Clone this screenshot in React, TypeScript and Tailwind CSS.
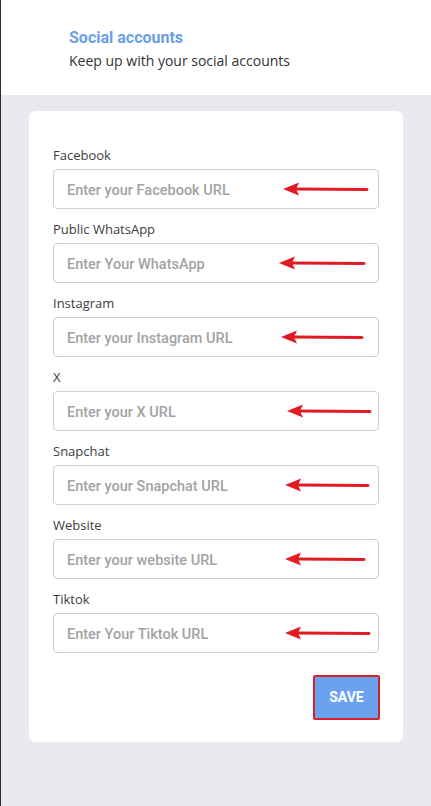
import React from "react";

type Field = {
  label: string;
  placeholder: string;
  // annotation arrow: tip x and tail x, relative to the input's left edge
  tip: number;
  tail: number;
};

const FIELDS: Field[] = [
  { label: "Facebook", placeholder: "Enter your Facebook URL", tip: 230, tail: 314 },
  { label: "Public WhatsApp", placeholder: "Enter Your WhatsApp", tip: 226, tail: 311 },
  { label: "Instagram", placeholder: "Enter your Instagram URL", tip: 228, tail: 309 },
  { label: "X", placeholder: "Enter your X URL", tip: 234, tail: 317 },
  { label: "Snapchat", placeholder: "Enter your Snapchat URL", tip: 232, tail: 315 },
  { label: "Website", placeholder: "Enter your website URL", tip: 232, tail: 311 },
  { label: "Tiktok", placeholder: "Enter Your Tiktok URL", tip: 232, tail: 316 },
];

function Arrow({ tip, tail }: { tip: number; tail: number }) {
  return (
    <svg
      className="pointer-events-none absolute left-0 top-0"
      width="326"
      height="40"
      viewBox="0 0 326 40"
    >
      <line x1={tip + 12} y1="20" x2={tail} y2="20.5" stroke="#e01b22" strokeWidth="3" strokeLinecap="round" />
      <path d={`M${tip} 20 L${tip + 16} 13.5 L${tip + 13} 20 L${tip + 16} 26.5 Z`} fill="#e01b22" />
    </svg>
  );
}

export default function App() {
  return (
    <div className="min-h-screen w-full border-l border-[#2b2b2b] bg-[#e9eaee] font-['Open_Sans',sans-serif]">
      <div className="h-[95px] bg-white pl-[68px] pt-[28px]">
        <h1 className="font-['Roboto',sans-serif] text-[16px] font-bold leading-[20px] text-[#6a9fe4]">
          Social accounts
        </h1>
        <p className="mt-[3px] text-[14px] leading-[20px] text-[#333]">
          Keep up with your social accounts
        </p>
      </div>

      <div className="px-[28px] pt-[16px] pb-[64px]">
        <div className="flex w-[374px] flex-col rounded-[7px] bg-white px-[24px] pt-[35px] pb-[22px]">
          <div className="flex flex-col gap-[11px]">
            {FIELDS.map((f) => (
              <div key={f.label} className="flex flex-col gap-[5px]">
                <label className="text-[13px] leading-[18px] text-[#3d3d3d]">{f.label}</label>
                <div className="relative">
                  <input
                    type="text"
                    placeholder={f.placeholder}
                    className="h-[40px] w-[326px] rounded-[4px] border border-[#cfcfcf] bg-white px-[13px] pt-[2px] font-['Roboto',sans-serif] text-[14.5px] font-medium text-[#444] outline-none placeholder:text-[#a3a3a3]"
                  />
                  <Arrow tip={f.tip} tail={f.tail} />
                </div>
              </div>
            ))}
          </div>
          <div className="mt-[22px] flex justify-end">
            <button
              type="button"
              className="mr-[-1px] h-[45px] w-[67px] rounded-[2px] border-2 border-[#d8202b] bg-[#6aa2ef] font-['Roboto',sans-serif] text-[14px] font-bold text-white"
            >
              SAVE
            </button>
          </div>
        </div>
      </div>
    </div>
  );
}
